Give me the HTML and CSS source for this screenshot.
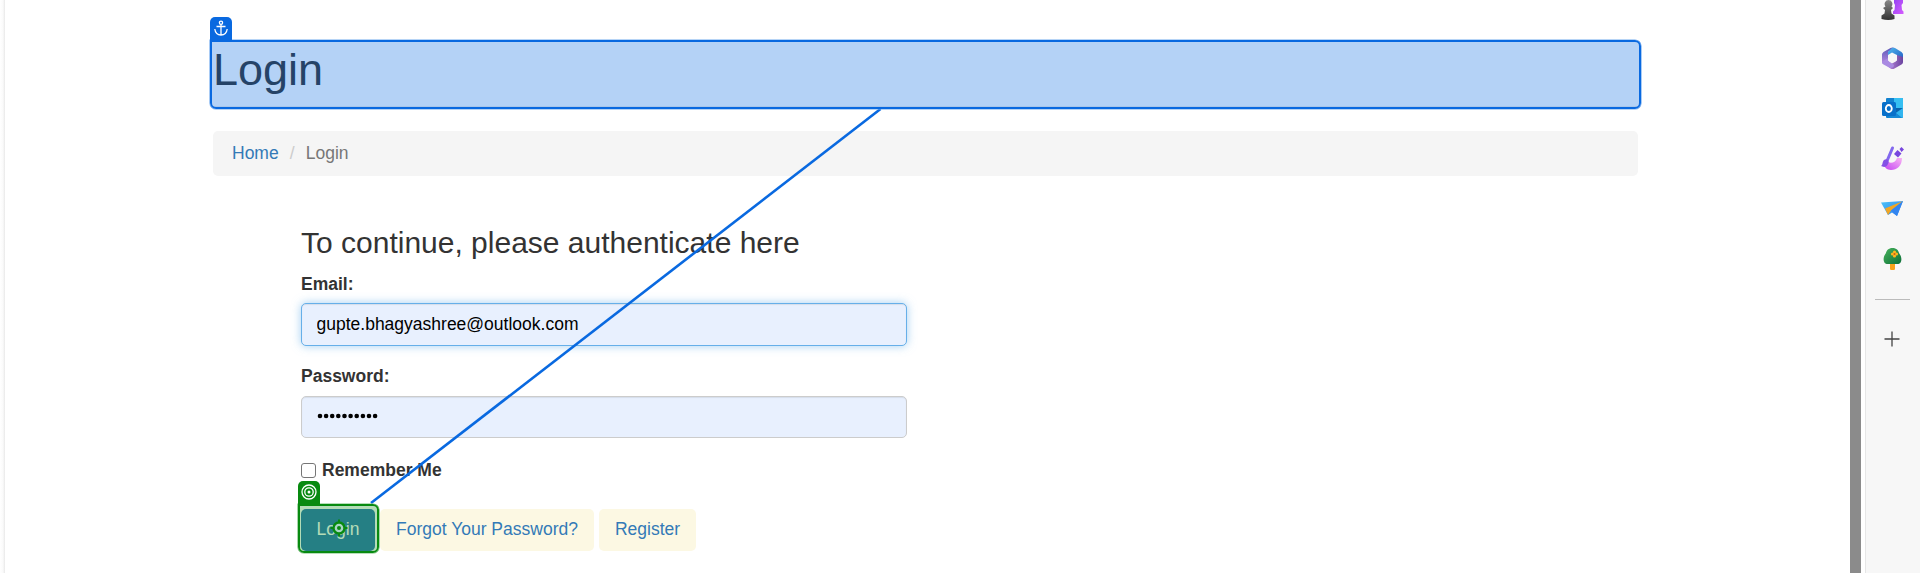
FILE: index.html
```html
<!DOCTYPE html>
<html lang="en">
<head>
<meta charset="utf-8">
<title>Login</title>
<link rel="stylesheet" href="styles.css">
</head>
<body>
<div class="window">
  <main class="page">
    <h1 class="page-title">Login</h1>
    <nav class="breadcrumb"><a href="#">Home</a><span class="slash">/</span><span class="current">Login</span></nav>
    <form class="form">
      <h3>To continue, please authenticate here</h3>
      <label class="label" for="email">Email:</label>
      <input class="field focused" id="email" type="text" value="gupte.bhagyashree@outlook.com">
      <label class="label" for="password">Password:</label>
      <div class="field dots" id="password"><svg width="64" height="8" viewBox="0 0 64 8" fill="#000"><circle cx="3" cy="4" r="2.3"/><circle cx="9.1" cy="4" r="2.3"/><circle cx="15.2" cy="4" r="2.3"/><circle cx="21.3" cy="4" r="2.3"/><circle cx="27.5" cy="4" r="2.3"/><circle cx="33.6" cy="4" r="2.3"/><circle cx="39.7" cy="4" r="2.3"/><circle cx="45.9" cy="4" r="2.3"/><circle cx="52" cy="4" r="2.3"/><circle cx="58.1" cy="4" r="2.3"/></svg></div>
      <div class="remember"><span class="box"></span><b>Remember Me</b></div>
      <div class="buttons"><a class="btn primary">Login</a><a class="btn">Forgot Your Password?</a><a class="btn">Register</a></div>
    </form>
  </main>
  <div class="scrollbar"></div>
  <aside class="sidebar">
    <svg class="app chess" viewBox="0 0 24 24">
      <defs>
        <linearGradient id="pawn" x2="0" y2="1"><stop stop-color="#888"/><stop offset="1" stop-color="#333"/></linearGradient>
        <linearGradient id="rook" x2="1" y2="1"><stop stop-color="#8a3ff0"/><stop offset="1" stop-color="#d65cff"/></linearGradient>
        <linearGradient id="blue" x2="1" y2="1"><stop stop-color="#4fb8ee"/><stop offset="1" stop-color="#1f55c0"/></linearGradient>
        <linearGradient id="violet" x2="1"><stop stop-color="#c08fe0"/><stop offset="1" stop-color="#6b439f"/></linearGradient>
        <linearGradient id="lilac" x2="0" y2="1"><stop stop-color="#5b58b8"/><stop offset="1" stop-color="#b78be0"/></linearGradient>
        <linearGradient id="magic" x1="1" x2="0" y2="1"><stop stop-color="#f9b4f4"/><stop offset="1" stop-color="#c344f2"/></linearGradient>
        <linearGradient id="leaf" x2="1" y2="1"><stop stop-color="#49b35c"/><stop offset="1" stop-color="#0b6f38"/></linearGradient>
        <linearGradient id="sky" x2="1" y2="1"><stop stop-color="#4cc4f8"/><stop offset="1" stop-color="#2b78ec"/></linearGradient>
      </defs>
      <path d="M14 1h9v6l-1.500 2 .5 5 1.500 1.500V18H13v-2.500l1.500-1.500.5-5L14 7z" fill="url(#rook)"/>
      <path d="M8.500 4a4 4 0 0 1 3 6.500l1.500 1.500-2 2 .5 3.500 3 2v3.500q-6 2-13 0v-3.500l3-2L5 14l-2-2 2.500-1.500a4 4 0 0 1 3-6.500z" fill="url(#pawn)"/>
    </svg>
    <svg class="app" viewBox="0 0 24 24">
      <path d="M2 8.500Q2 7 3.500 6l7-4q2-1 4 0L8 6v9l-5 3q-1-1-1-2.500z" fill="url(#lilac)"/>
      <path d="M8 6l4-4q1.500-.7 3 0l6.500 4q1.500 1 1.500 2.500v8L17 14V9l-5-2.500L8 9z" fill="url(#blue)"/>
      <path d="M23 11v5q0 1.500-1.500 2.500l-7 4q-2 1-4 0L6 19l6-1.500 5-3V9z" fill="url(#violet)"/>
      <path d="M2 16q0 1.500 1.500 2.500L10 22q4 0 4-3l-2-1.500-4-3V12z" fill="#a98ae2"/>
      <circle cx="12.500" cy="12.500" r="4" fill="#f7f7f7"/>
    </svg>
    <svg class="app" viewBox="0 0 24 24">
      <rect x="6" y="2" width="17" height="20" rx="1" fill="#1282d0"/>
      <path d="M14 2h8q1 0 1 1v9h-9z" fill="#36bff2"/>
      <path d="M13 12h10L15 17z" fill="#0b62ad"/><path d="M16 17l7-5v9q0 1-1 1z" fill="#32b5ef"/><path d="M7 22h15l-7-5z" fill="#1688d6"/>
      <rect x="2" y="6" width="14" height="14" rx="1.500" fill="#0870ca"/><ellipse cx="8.800" cy="12.500" rx="3" ry="3.500" fill="none" stroke="#fff" stroke-width="1.800"/>
    </svg>
    <svg class="app" viewBox="0 0 24 24">
      <path d="M7 14c1 4 8 4 10-2h5c0 8-5 12-11 12-4 0-7-3-7-6z" fill="url(#magic)"/>
      <path d="M12.500 2L7 15" stroke="#8268ee" stroke-width="3" stroke-linecap="round"/><path d="M4 14c3-2 6 1 4 4-2 4-5 3-7 2 2-1 1-4 3-6z" fill="#8450e5"/>
      <path d="M17.500 4l4 3.500-3.500 4L14 8zM21.500 1l2.500 2.500L21.500 6 19.500 3z" fill="#7846de"/>
    </svg>
    <svg class="app" viewBox="0 0 24 24">
      <path d="M1 6.500L23 5l-6 15-5-3.500L8 19z" fill="url(#sky)"/><path d="M23 5L5 12.500 8 19l3-4.500z" fill="#f2a623"/><path d="M23 5l-12 9.500 6 5.500z" fill="#3385f0"/>
    </svg>
    <svg class="app" viewBox="0 0 24 24">
      <path d="M10 17h5v6.500q-2.500 1-5 0z" fill="#f7a21b"/><path d="M12.500 2c4 0 6 2.500 6.500 5 2 2.500 3 6 2 8.500-.5 2-2 2.500-4 2.500H8c-2 0-3.500-.5-4-2.500C3 13 4 9.500 6 7c.5-2.500 2.500-5 6.500-5z" fill="url(#leaf)"/><g fill="#ffb51f"><circle cx="14.500" cy="6" r="1.600"/><circle cx="14.500" cy="10" r="1.600"/><circle cx="12.500" cy="8" r="1.600"/><circle cx="16.500" cy="8" r="1.600"/></g><circle cx="14.500" cy="8" r="1" fill="#d55c12"/>
    </svg>
    <div class="divider"></div>
    <svg class="plus" viewBox="0 0 16 16"><path d="M8 .5v15M.5 8h15" stroke="#444" stroke-width="1.300"/></svg>
  </aside>
</div>
<svg class="link-line" width="1920" height="573"><path d="M880.500 109L371 503" stroke="#0969e0" stroke-width="2.600"/></svg>
<div class="highlight anchor"><span class="tag"><svg width="22" height="22" viewBox="0 0 22 22" fill="none" stroke="#fff" stroke-width="1.300"><circle cx="11" cy="5.700" r="1.600"/><path d="M11 7.300V18M6.500 9.500h9M4.800 12c.5 4 3.200 6 6.200 6s5.700-2 6.200-6"/></svg></span></div>
<div class="highlight target"><span class="tag"><svg width="22" height="22" viewBox="0 0 22 22" fill="none" stroke="#fff" stroke-width="1.300"><circle cx="11" cy="11" r="7"/><circle cx="11" cy="11" r="4.200"/><circle cx="11" cy="11" r="1.500" fill="#fff" stroke="none"/></svg></span>
<svg class="cross" width="18" height="18" viewBox="0 0 18 18"><circle cx="9" cy="9" r="5.500" fill="#a9d5c4" stroke="#088a10" stroke-width="2.400"/><path d="M9 .5v3M9 14.500v3M.5 9h3M14.500 9h3" stroke="#088a10" stroke-width="2"/><circle cx="9" cy="9" r="2" fill="#088a10"/></svg></div>
</body>
</html>
```
FILE: styles.css
```css
* { box-sizing: border-box; }
body { margin: 0; background: #fff; overflow: hidden; font: 17.5px/25px "Liberation Sans", Arial, sans-serif; color: #333; }
a { color: #337ab7; text-decoration: none; }
.window { display: flex; height: 573px; }
.page { flex: 1; padding: 39px 212px 0 213px; background: linear-gradient(to right, #fff 0, #fafafa 3px, #e8e8e8 5px, #fff 5px); }
.page-title { margin: 0; height: 68px; padding-top: 6px; font-size: 45px; line-height: 50px; font-weight: 400; border-bottom: 1px solid #eee; }
.breadcrumb { display: flex; margin-top: 24px; height: 45px; padding: 10px 19px; border-radius: 5px; background: #f5f5f5; }
.slash { color: #ccc; width: 27px; text-align: center; }
.current { color: #777; }
.form { margin: 50px 0 0 88px; width: 606px; }
h3 { margin: 0; font-size: 30px; line-height: 33px; font-weight: 400; }
.label { display: block; font-weight: 700; margin-top: 13px; height: 25px; margin-bottom: 6px; }
.field { display: block; width: 606px; height: 43px; padding: 7px 14.5px; border: 1px solid #ccc; border-radius: 5px; background: #e8f0fe; font: inherit; color: #000; outline: none; box-shadow: inset 0 1px 1px rgba(0,0,0,.08); }
.focused { border-color: #66afe9; box-shadow: inset 0 1px 1px rgba(0,0,0,.08), 0 0 10px rgba(102,175,233,.6); }
.focused + .label { margin-top: 18px; margin-bottom: 7px; }
.dots { display: flex; align-items: center; height: 42px; padding-bottom: 10px; }
.remember { display: flex; align-items: center; height: 25px; margin-top: 20px; gap: 6px; }
.box { width: 15px; height: 15px; border: 1px solid #767676; border-radius: 3px; }
.buttons { display: flex; gap: 5px; margin-top: 26px; }
.btn { height: 42px; padding: 8px 16px; border-radius: 5px; background: #fcf8e3; white-space: nowrap; }
.primary { background: #337ab7; color: #fff; padding: 8px 15.6px; }
.scrollbar { width: 11px; background: #8b8b8b; margin-right: 4px; }
.sidebar { width: 55px; border-left: 1px solid #e6e6e6; background: #f7f7f7; display: flex; flex-direction: column; align-items: center; padding-right: 2px; }
.app { width: 24px; height: 24px; flex: none; margin-bottom: 26px; }
.chess { margin-top: -4px; }
.divider { flex: none; width: 35px; height: 1px; background: #bbb; margin-top: 3px; }
.plus { width: 16px; height: 16px; margin-top: 31px; }
.link-line { position: absolute; left: 0; top: 0; }
.highlight { position: absolute; border: 2px solid; border-radius: 0 6px 6px 6px; }
.tag { position: absolute; left: -2px; top: -24px; width: 22px; height: 23px; border-radius: 5px 5px 0 0; }
.tag svg { display: block; }
.anchor { left: 210px; top: 40px; width: 1431px; height: 69px; border-color: #0969e0; background: rgba(5,105,225,.3); box-shadow: 0 0 0 .6px #6fa9ee; }
.anchor .tag { background: #0969e0; top: -25px; height: 24px; }
.target { left: 298px; top: 504px; width: 81px; height: 49px; border-color: #088a10; background: rgba(8,138,16,.3); box-shadow: 0 0 0 .6px #70bd74; }
.target .tag { background: #088a10; top: -25px; height: 24px; }
.cross { position: absolute; left: 29.5px; top: 13px; }
```
